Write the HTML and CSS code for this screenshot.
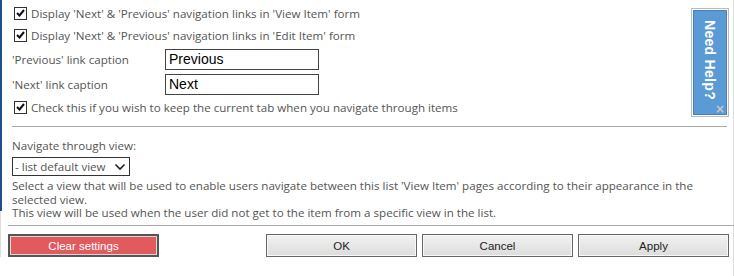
FILE: index.html
```html
<!DOCTYPE html>
<html>
<head>
<meta charset="utf-8">
<link rel="stylesheet" href="styles.css">
</head>
<body>
<div class="page">
  <div class="main">
    <div class="check-row first">
      <span class="cb"><svg width="9" height="8" viewBox="0 0 9 8"><path d="M1 4 L3.5 6.5 L8 1" fill="none" stroke="#111" stroke-width="2"/></svg></span>
      <span>Display 'Next' &amp; 'Previous' navigation links in 'View Item' form</span>
    </div>
    <div class="check-row">
      <span class="cb"><svg width="9" height="8" viewBox="0 0 9 8"><path d="M1 4 L3.5 6.5 L8 1" fill="none" stroke="#111" stroke-width="2"/></svg></span>
      <span>Display 'Next' &amp; 'Previous' navigation links in 'Edit Item' form</span>
    </div>
    <div class="field-row first-field">
      <span class="label">'Previous' link caption</span>
      <span class="input">Previous</span>
    </div>
    <div class="field-row">
      <span class="label">'Next' link caption</span>
      <span class="input">Next</span>
    </div>
    <div class="check-row third">
      <span class="cb"><svg width="9" height="8" viewBox="0 0 9 8"><path d="M1 4 L3.5 6.5 L8 1" fill="none" stroke="#111" stroke-width="2"/></svg></span>
      <span>Check this if you wish to keep the current tab when you navigate through items</span>
    </div>
    <div class="rule"></div>
    <div class="nav-label">Navigate through view:</div>
    <div class="select">
      <span>- list default view</span>
      <svg width="12" height="8" viewBox="0 0 12 8"><path d="M1.5 1.5 L6 6 L10.5 1.5" fill="none" stroke="#222" stroke-width="1.6"/></svg>
    </div>
    <div class="desc">Select a view that will be used to enable users navigate between this list 'View Item' pages according to their appearance in the selected view.<br>This view will be used when the user did not get to the item from a specific view in the list.</div>
    <div class="help">
      <div class="help-inner">
        <span class="help-text">Need Help?</span>
        <span class="help-x">×</span>
      </div>
    </div>
  </div>
  <div class="footer">
    <div class="rule2"></div>
    <div class="buttons">
      <button class="btn clear">Clear settings</button>
      <div class="spacer"></div>
      <button class="btn">OK</button>
      <button class="btn">Cancel</button>
      <button class="btn">Apply</button>
    </div>
  </div>
</div>
</body>
</html>
```
FILE: styles.css
```css
html, body {
  margin: 0;
  padding: 0;
  background: #fff;
}
body {
  font-family: "Open Sans", "DejaVu Sans", sans-serif;
  font-size: 11.6px;
  color: #555;
}
.page {
  width: 734px;
  height: 276px;
  position: relative;
  border-right: 1px solid #ddd;
  box-sizing: border-box;
}
.main {
  position: relative;
  border-left: 2px solid #1f4e8a;
  padding-left: 10px;
  padding-top: 2px;
  height: 211px;
  box-sizing: border-box;
}
.check-row {
  display: flex;
  align-items: center;
  height: 22px;
  padding-left: 2px;
}
.cb {
  width: 11px;
  height: 11px;
  border: 1px solid #333;
  background: #fff;
  display: inline-flex;
  align-items: center;
  justify-content: center;
  margin-right: 4px;
  flex: none;
}
.field-row {
  display: flex;
  align-items: center;
  height: 21px;
  margin-top: 4px;
}
.first-field {
  margin-top: 3px;
}
.label {
  width: 153px;
}
.input {
  width: 149px;
  height: 19px;
  border: 1px solid #444;
  font-family: "Liberation Sans", Arial, sans-serif;
  font-size: 14px;
  color: #000;
  line-height: 19px;
  padding-left: 3px;
}
.third {
  margin-top: 1px;
}
.rule {
  height: 0;
  border-top: 1px solid #aaa;
  margin-top: 8px;
  margin-right: 6px;
}
.nav-label {
  margin-top: 10px;
  height: 18px;
  line-height: 18px;
}
.select {
  margin-top: 2px;
  height: 17px;
  border: 1px solid #333;
  display: flex;
  align-items: center;
  justify-content: space-between;
  padding: 0 3px 0 2px;
  box-sizing: content-box;
  width: 111px;
}
.desc {
  margin-top: 3px;
  line-height: 13.5px;
  padding-right: 10px;
}
.help {
  position: absolute;
  right: 4px;
  top: 8px;
  width: 34px;
  height: 105px;
  border: 1px solid #bbb;
  padding: 1px;
  box-sizing: content-box;
}
.help-inner {
  position: relative;
  width: 32px;
  height: 103px;
  background: #5b9bd5;
  border: 1px solid #4a7fb8;
}
.help-text {
  position: absolute;
  left: 8px;
  top: 9px;
  writing-mode: vertical-rl;
  color: #fff;
  font-family: "Liberation Sans", Arial, sans-serif;
  font-weight: bold;
  font-size: 14px;
  letter-spacing: 0.3px;
}
.help-x {
  position: absolute;
  right: 1px;
  bottom: -2px;
  color: #c8c8c8;
  font-family: "DejaVu Sans", sans-serif;
  font-weight: bold;
  font-size: 12px;
}
.footer {
  border-left: 1px solid #ddd;
  padding-left: 7px;
  padding-right: 4px;
  padding-top: 14px;
}
.rule2 {
  border-top: 1px solid #aaa;
  margin-right: -5px;
}
.buttons {
  display: flex;
  margin-top: 8px;
  gap: 5px;
}
.spacer {
  flex: 1;
}
.btn {
  width: 151px;
  height: 23px;
  border: 1px solid #666;
  box-shadow: inset 0 0 0 1px #f8f8f8;
  background: linear-gradient(#f2f2f2, #dcdcdc);
  font-family: "Liberation Sans", Arial, sans-serif;
  font-size: 11.5px;
  color: #222;
  padding: 0;
}
.clear {
  width: 151px;
  background: #e05a5e;
  border: 2px solid #555;
  box-shadow: inset 0 0 0 1px #d8d8d8;
  color: #fff;
}
```
